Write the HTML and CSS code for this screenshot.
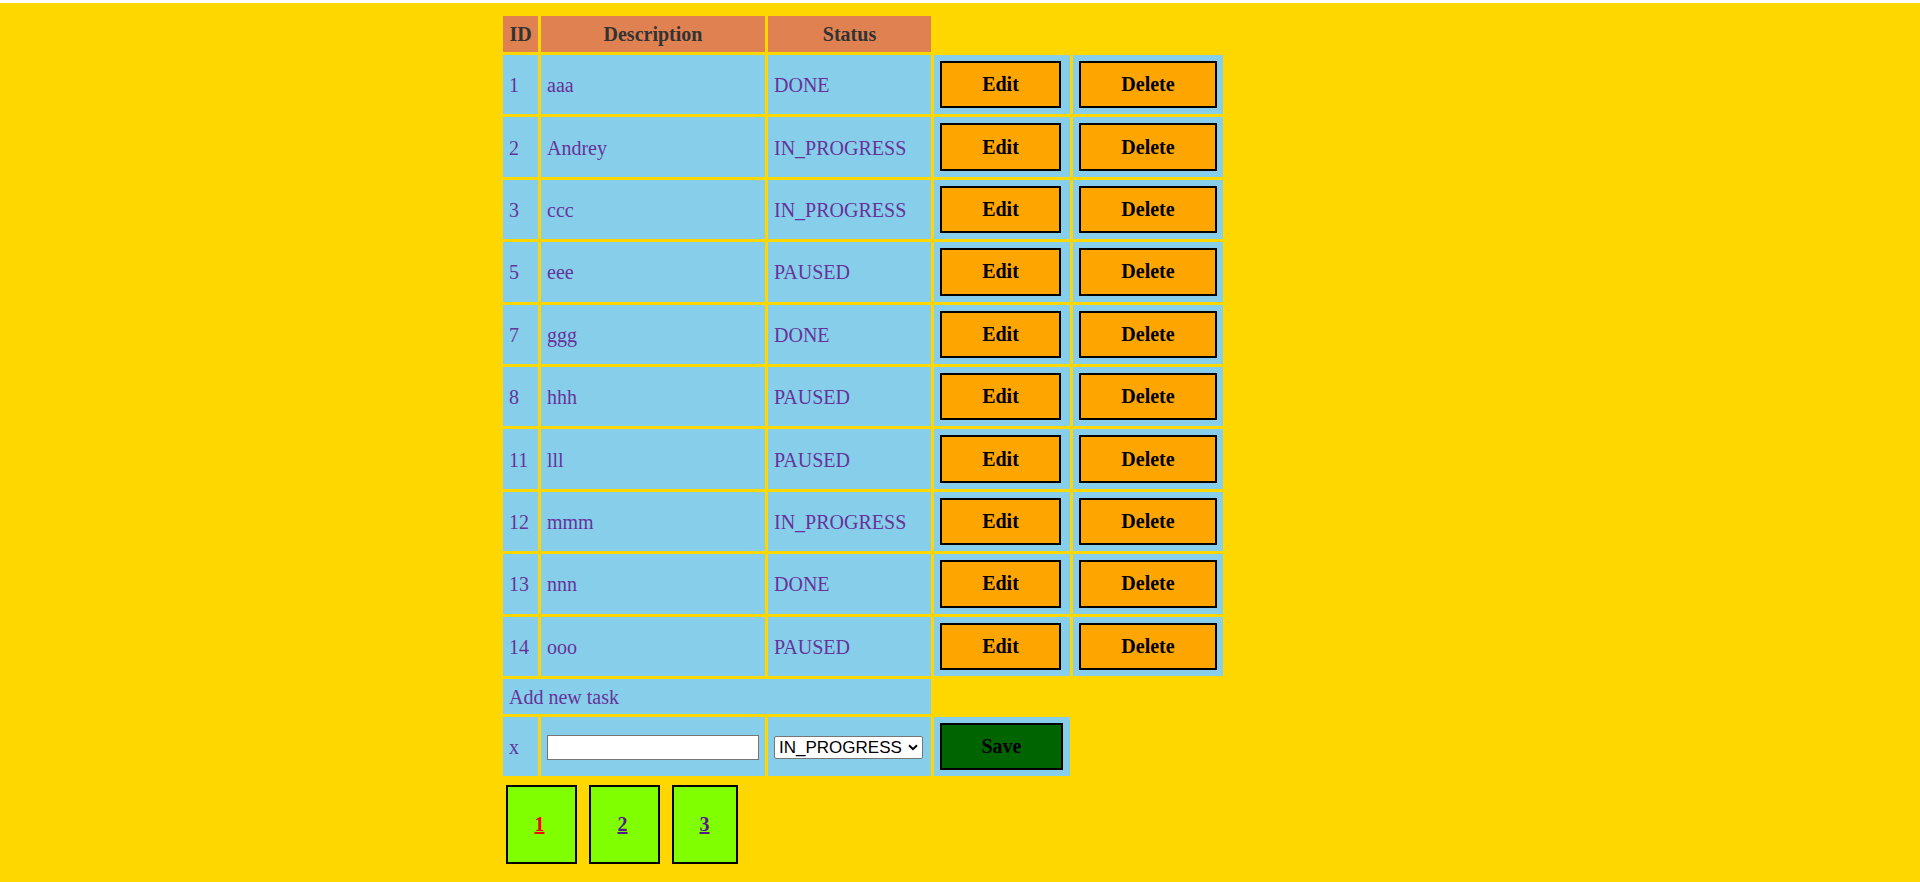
FILE: index.html
```html
<!DOCTYPE html>
<html>
<head>
<meta charset="utf-8">
<title>Tasks</title>
<link rel="stylesheet" href="styles.css">
</head>
<body>
<div class="page">
  <table class="tasks">
    <thead>
      <tr>
        <th class="c-id">ID</th>
        <th class="c-desc">Description</th>
        <th class="c-status">Status</th>
      </tr>
    </thead>
    <tbody>
      <tr><td class="c-id">1</td><td class="c-desc">aaa</td><td class="c-status">DONE</td><td class="c-edit"><button class="btn btn-edit">Edit</button></td><td class="c-del"><button class="btn btn-del">Delete</button></td></tr>
      <tr><td class="c-id">2</td><td class="c-desc">Andrey</td><td class="c-status">IN_PROGRESS</td><td class="c-edit"><button class="btn btn-edit">Edit</button></td><td class="c-del"><button class="btn btn-del">Delete</button></td></tr>
      <tr><td class="c-id">3</td><td class="c-desc">ccc</td><td class="c-status">IN_PROGRESS</td><td class="c-edit"><button class="btn btn-edit">Edit</button></td><td class="c-del"><button class="btn btn-del">Delete</button></td></tr>
      <tr><td class="c-id">5</td><td class="c-desc">eee</td><td class="c-status">PAUSED</td><td class="c-edit"><button class="btn btn-edit">Edit</button></td><td class="c-del"><button class="btn btn-del">Delete</button></td></tr>
      <tr><td class="c-id">7</td><td class="c-desc">ggg</td><td class="c-status">DONE</td><td class="c-edit"><button class="btn btn-edit">Edit</button></td><td class="c-del"><button class="btn btn-del">Delete</button></td></tr>
      <tr><td class="c-id">8</td><td class="c-desc">hhh</td><td class="c-status">PAUSED</td><td class="c-edit"><button class="btn btn-edit">Edit</button></td><td class="c-del"><button class="btn btn-del">Delete</button></td></tr>
      <tr><td class="c-id">11</td><td class="c-desc">lll</td><td class="c-status">PAUSED</td><td class="c-edit"><button class="btn btn-edit">Edit</button></td><td class="c-del"><button class="btn btn-del">Delete</button></td></tr>
      <tr><td class="c-id">12</td><td class="c-desc">mmm</td><td class="c-status">IN_PROGRESS</td><td class="c-edit"><button class="btn btn-edit">Edit</button></td><td class="c-del"><button class="btn btn-del">Delete</button></td></tr>
      <tr><td class="c-id">13</td><td class="c-desc">nnn</td><td class="c-status">DONE</td><td class="c-edit"><button class="btn btn-edit">Edit</button></td><td class="c-del"><button class="btn btn-del">Delete</button></td></tr>
      <tr><td class="c-id">14</td><td class="c-desc">ooo</td><td class="c-status">PAUSED</td><td class="c-edit"><button class="btn btn-edit">Edit</button></td><td class="c-del"><button class="btn btn-del">Delete</button></td></tr>
      <tr class="add-row"><td colspan="3">Add new task</td></tr>
      <tr>
        <td class="c-id">x</td>
        <td class="c-desc c-ctrl"><input class="inp" type="text"></td>
        <td class="c-status c-ctrl">
          <span class="sel-wrap">
            <select class="sel"><option>IN_PROGRESS</option><option>DONE</option><option>PAUSED</option></select>
            <svg class="sel-arrow" width="10" height="7" viewBox="0 0 10 7"><path d="M1 1.2 L5 5.2 L9 1.2" fill="none" stroke="#000" stroke-width="2"/></svg>
          </span>
        </td>
        <td class="c-edit"><button class="btn btn-save">Save</button></td>
      </tr>
    </tbody>
  </table>
  <div class="pager">
    <a class="pg pg-active" href="#">1</a>
    <a class="pg" href="#">2</a>
    <a class="pg pg-last" href="#">3</a>
  </div>
</div>
</body>
</html>
```

FILE: styles.css
```css
html, body {
  margin: 0;
  padding: 0;
  background: #ffffff;
}
.page {
  margin-top: 3px;
  min-height: 879px;
  background: #FFD700;
  padding: 10px 0 0 500px;
  box-sizing: border-box;
  font-family: "Liberation Serif", "Times New Roman", serif;
  font-size: 20px;
}
.tasks {
  border-collapse: separate;
  border-spacing: 3px;
}
.tasks th {
  background: #E08152;
  color: #333333;
  font-weight: bold;
  padding: 6px;
  line-height: 24px;
  text-align: center;
}
.tasks td {
  background: #87CEEB;
  color: #663399;
  padding: 7px 6px 5px;
  line-height: 23px;
  text-align: left;
  vertical-align: middle;
}
.tasks td.c-edit,
.tasks td.c-del,
.tasks td.c-ctrl {
  padding: 6px;
}
.c-id { width: 23px; }
.c-desc { width: 212px; }
.c-status { width: 151px; }
.c-edit { width: 124px; }
.c-del { width: 138px; }
.btn {
  display: block;
  height: 47.4px;
  border: 2px solid #000;
  background: #FFA500;
  color: #000;
  font-family: "Liberation Serif", "Times New Roman", serif;
  font-size: 20px;
  font-weight: bold;
  padding: 0;
  margin: 0;
  box-sizing: border-box;
}
.btn-edit { width: 121px; }
.btn-del { width: 138px; }
.btn-save { width: 123px; background: #006400; }
.inp {
  display: block;
  width: 212px;
  height: 25px;
  box-sizing: border-box;
  border: 1px solid #767676;
  background: #fff;
  margin: 2px 0 0;
  padding: 1px 2px;
}
.sel-wrap {
  position: relative;
  display: block;
  width: 149px;
  margin-top: 2px;
}
.sel {
  display: block;
  width: 149px;
  height: 23px;
  box-sizing: border-box;
  border: 1px solid #767676;
  border-radius: 2px;
  background: #fff;
  color: #000;
  font-family: "Liberation Sans", Arial, sans-serif;
  font-size: 17px;
  margin: 0;
  padding: 0 18px 0 4px;
  -webkit-appearance: none;
  appearance: none;
}
.sel-arrow {
  position: absolute;
  right: 5px;
  top: 8px;
  pointer-events: none;
}
.pager {
  display: flex;
  padding-top: 3px;
}
.pg {
  display: flex;
  align-items: center;
  justify-content: center;
  width: 71px;
  height: 79px;
  box-sizing: border-box;
  margin: 3px 6px;
  padding-right: 4px;
  border: 2px solid #000;
  background: #7FFF00;
  color: #551A8B;
  font-weight: bold;
  font-size: 20px;
  text-decoration: underline;
}
.pg-active { color: #FF0000; }
.pg-last { width: 66px; padding-right: 1px; }
```
